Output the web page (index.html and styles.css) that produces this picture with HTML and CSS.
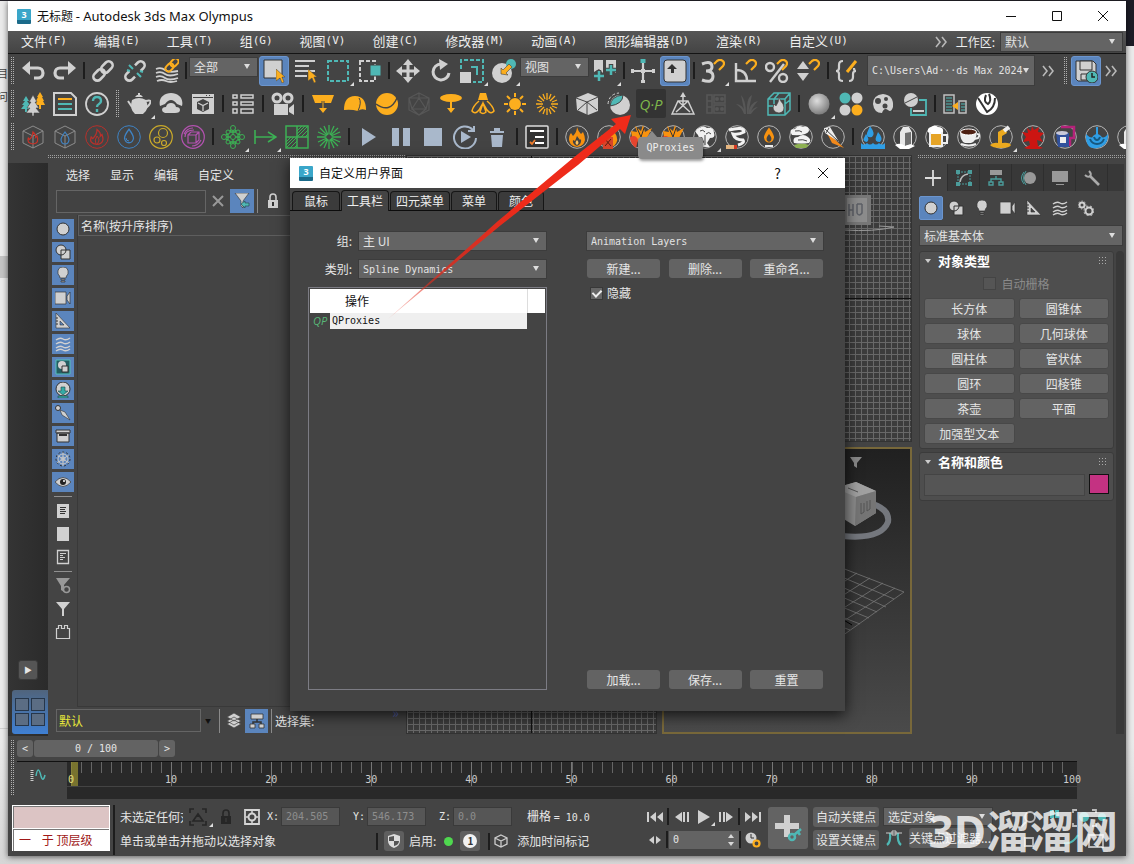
FILE: index.html
```html
<!DOCTYPE html>
<html lang="zh-CN">
<head>
<meta charset="utf-8">
<meta name="viewport" content="width=device-width, initial-scale=1">
<title>无标题 - Autodesk 3ds Max Olympus</title>
<link rel="stylesheet" href="styles.css">
</head>
<body>
<svg class="sprite" aria-hidden="true">
  <defs>
    <radialGradient id="ball" cx=".4" cy=".35" r=".7"><stop offset="0" stop-color="#ddd"/><stop offset="1" stop-color="#777"/></radialGradient>
    <linearGradient id="tail" gradientUnits="userSpaceOnUse" x1="388" y1="319" x2="520" y2="208"><stop offset="0" stop-color="#e8311f" stop-opacity=".2"/><stop offset=".5" stop-color="#e02a1c" stop-opacity=".85"/><stop offset="1" stop-color="#ee2b1a"/></linearGradient>
  </defs>
  <symbol id="undo" viewBox="0 0 24 24"><path fill="#d0d0d0" d="M1 9l8-7v14z"/><path fill="none" stroke="#d0d0d0" stroke-width="3.200" d="M7 9h10a4.500 4.500 0 0 1 0 10h-4"/></symbol>
  <symbol id="redo" viewBox="0 0 24 24"><path fill="#d0d0d0" d="M23 9l-8-7v14z"/><path fill="none" stroke="#d0d0d0" stroke-width="3.200" d="M17 9H7a4.500 4.500 0 0 0 0 10h4"/></symbol>
  <symbol id="link" viewBox="0 0 24 24"><g transform="rotate(-45 12 12)" fill="none" stroke="#d0d0d0" stroke-width="2.600"><rect x="0" y="8" width="13" height="8" rx="4"/><rect x="11" y="8" width="13" height="8" rx="4"/></g></symbol>
  <symbol id="unlink" viewBox="0 0 24 24"><g transform="rotate(-45 12 12)" fill="none" stroke="#d0d0d0" stroke-width="2.600"><path d="M8 16H4a4 4 0 0 1 0-8h4M16 8h4a4 4 0 0 1 0 8h-4"/></g><path stroke="#4fb8b5" stroke-width="2" d="M6 6l4 4M14 14l4 4M4 11l3 1M17 12l3 1"/></symbol>
  <symbol id="bind" viewBox="0 0 24 24"><g fill="none" stroke="#d0d0d0" stroke-width="1.800"><path d="M1 10q5-2 9 1t13 1M1 14q5-2 9 1t13 0M1 18q5-2 9 1t13 0M2 22q5-2 9 0t11 0"/></g><g transform="rotate(-45 17 6)" fill="none" stroke="#fcae1e" stroke-width="2"><rect x="9" y="3" width="9" height="6" rx="3"/><rect x="16" y="3" width="9" height="6" rx="3"/></g></symbol>
  <symbol id="cursor" viewBox="0 0 10 14"><path fill="#fcae1e" stroke="#444" stroke-width=".5" d="M0 0l9 8H6l2 5-2 1-2-5-4 3z"/></symbol>
  <symbol id="pick" viewBox="0 0 24 24"><path fill="#d0d0d0" stroke="#333" d="M2 1h18v18H2z"/><use href="#cursor" x="14" y="10" width="10" height="14"/></symbol>
  <symbol id="byname" viewBox="0 0 24 24"><path stroke="#d0d0d0" stroke-width="2" d="M1 2h20M1 7h14M1 12h20M1 17h12"/><use href="#cursor" x="14" y="10" width="10" height="14"/></symbol>
  <symbol id="region" viewBox="0 0 24 24"><path fill="none" stroke="#4fb8b5" stroke-width="2" stroke-dasharray="4 2" d="M2 2h20v20H2z"/></symbol>
  <symbol id="crossing" viewBox="0 0 24 24"><path fill="none" stroke="#d0d0d0" stroke-width="2" stroke-dasharray="4 2" d="M2 2h15v20H2z"/><path fill="#4fb8b5" stroke="#444" d="M12 6h11v11H12z"/></symbol>
  <symbol id="move" viewBox="0 0 24 24"><path stroke="#d0d0d0" stroke-width="3" d="M12 4v16M4 12h16"/><path fill="#d0d0d0" d="M12 0l5 6H7zM12 24l5-6H7zM0 12l6-5v10zM24 12l-6-5v10z"/></symbol>
  <symbol id="rotate" viewBox="0 0 24 24"><path fill="none" stroke="#d0d0d0" stroke-width="3" d="M13 5a8 8 0 1 0 8 9"/><path fill="#d0d0d0" d="M11 0l9 5-8 6z"/></symbol>
  <symbol id="scale" viewBox="0 0 24 24"><path fill="none" stroke="#4fb8b5" stroke-width="2" stroke-dasharray="4 2" d="M1 10V1h22v22H13"/><path fill="none" stroke="#4fb8b5" stroke-width="2" d="M11 8h6v8"/><path fill="#d0d0d0" d="M0 13h11v11H0z"/></symbol>
  <symbol id="place" viewBox="0 0 24 24"><circle cx="10" cy="14" r="10" fill="#d0d0d0"/><circle cx="19" cy="5" r="5" fill="#4fb8b5"/><path fill="#fcae1e" stroke="#444" stroke-width=".6" d="M9 15V9l2 2 6-6 3 3-6 6 2 2z"/></symbol>
  <symbol id="pivot" viewBox="0 0 24 24"><path fill="#d0d0d0" d="M1 1h9v13l-4-4-5 3zM13 1h10v13l-5-4-5 3z"/><path stroke="#444" stroke-width="4.500" d="M0 17h12M6 11v13M12 11h12M18 5v12"/><path stroke="#4fb8b5" stroke-width="2.500" d="M1 17h10M6 12v10M13 11h10M18 6v10"/></symbol>
  <symbol id="axis" viewBox="0 0 24 24"><path stroke="#d0d0d0" stroke-width="2.200" d="M12 4v20M1 12h22"/><path stroke="#4fb8b5" stroke-width="5" d="M12 0v4"/><path stroke="#d0d0d0" stroke-width="4" d="M0 12h3M21 12h3M12 21v3M10 12h4"/></symbol>
  <symbol id="keymode" viewBox="0 0 24 24"><rect x="1" y="1" width="22" height="22" rx="3" fill="#d0d0d0" stroke="#333"/><path fill="#333" d="M9 5l5 5h-3v4H8v-4H4z"/></symbol>
  <symbol id="magnet" viewBox="0 0 12 12"><path fill="none" stroke="#fcae1e" stroke-width="2.200" d="M1 5l3-3c4-3 9 1 6 5l-4 4"/></symbol>
  <symbol id="snap3" viewBox="0 0 24 24"><path fill="none" stroke="#d0d0d0" stroke-width="3" d="M1 5q10-4 10 3 0 4-6 4 7 0 7 5 0 8-11 4"/><use href="#magnet" x="12" y="0" width="12" height="12"/></symbol>
  <symbol id="anglesnap" viewBox="0 0 24 24"><path fill="none" stroke="#d0d0d0" stroke-width="2.400" d="M3 4v18h20M3 11q11 0 11 11"/><use href="#magnet" x="12" y="0" width="12" height="12"/></symbol>
  <symbol id="percent" viewBox="0 0 24 24"><g fill="none" stroke="#d0d0d0" stroke-width="2.400"><circle cx="5" cy="8" r="4"/><circle cx="18" cy="19" r="4"/><path d="M19 5L5 23"/></g><use href="#magnet" x="11" y="0" width="12" height="12"/></symbol>
  <symbol id="spinsnap" viewBox="0 0 24 24"><path fill="#d0d0d0" d="M6 2l6 8H0zM6 22l6-8H0z"/><use href="#magnet" x="11" y="0" width="12" height="12"/></symbol>
  <symbol id="braces" viewBox="0 0 24 24"><path fill="none" stroke="#d0d0d0" stroke-width="2.200" d="M8 2Q4 2 4 6v3q0 3-3 3 3 0 3 3v4q0 3 4 3M14 22q4 0 4-4v-3q0-3 3-3-2 0-2-3"/><path stroke="#fcae1e" stroke-width="3" d="M12 13l9-11"/></symbol>
  <symbol id="more" viewBox="0 0 12 12"><path fill="none" stroke="#b8b8b8" stroke-width="1.600" d="M1 1l4 5-4 5M7 1l4 5-4 5"/></symbol>
  <symbol id="save" viewBox="0 0 24 24"><path fill="#d0d0d0" stroke="#333" d="M2 2h17l3 3v17H4l-2-2z"/><path fill="#d0d0d0" stroke="#333" d="M6 2h12v9H6z"/><path fill="#d0d0d0" stroke="#333" d="M7 15h8v6H7z"/><circle cx="18" cy="18" r="6" fill="#4fb8b5" stroke="#333"/><path stroke="#222" stroke-width="1.500" fill="none" d="M18 14v4h3"/></symbol>

  <symbol id="trees" viewBox="0 0 24 24"><path fill="#4fb8b5" d="M5 4l3 5H6l3 4H7l2 4H0l3-4H1l3-4H2zM4 16h2v4H4z"/><path fill="#fcae1e" d="M19 0l3 5h-1l2 4h-1l2 4H14l2-4h-1l2-4h-1zM18 13h2v4h-2z"/><path fill="#d0d0d0" stroke="#444" stroke-width=".6" d="M12 3l4 7h-2l4 6h-3l4 5h-6v3h-2v-3H5l4-5H6l4-6H8z"/></symbol>
  <symbol id="list" viewBox="0 0 24 24"><path fill="none" stroke="#d0d0d0" stroke-width="2" d="M1 1h17l5 5v17H1z"/><path stroke="#fcae1e" stroke-width="2" d="M5 7h14"/><path stroke="#4fb8b5" stroke-width="2" d="M5 12h14M5 17h14"/></symbol>
  <symbol id="help" viewBox="0 0 24 24"><circle cx="12" cy="12" r="11" fill="none" stroke="#d0d0d0" stroke-width="1.800"/><path fill="none" stroke="#4fb8b5" stroke-width="2.400" d="M8 9q0-4 4-4t4 4q0 2-2 3t-2 3M12 17v3"/></symbol>
  <symbol id="teapot" viewBox="0 0 24 24"><path fill="#d0d0d0" d="M5 8q7-4 14 0 4 9-3 14H8Q2 17 5 8zM8 5h8l-2-2h-1V1h-2v2h-1z"/><path fill="none" stroke="#d0d0d0" stroke-width="2" d="M19 9q7-2 3 4l-4 4M5 15L1 9"/></symbol>
  <symbol id="dome" viewBox="0 0 24 24"><path fill="#d0d0d0" d="M1 14C-1 6 5 1 12 1s13 5 11 13l-5-2q-6-8-12 0z"/><path fill="#d0d0d0" d="M6 21q-3-1-3-3 0-3 4-3 1-4 5-4t5 4q4 0 4 3t-5 3z"/></symbol>
  <symbol id="render" viewBox="0 0 24 24"><path fill="#d0d0d0" d="M1 2h22v20H1z"/><path fill="#444" d="M2 5h20v1H2zM15 3h1v1h-1zM18 3h1v1h-1zM12 7l6 3v7l-6 3-6-3v-7z"/><path fill="none" stroke="#d0d0d0" stroke-width="1.300" d="M7 11l5 2.500 5-2.500M12 13v6"/></symbol>
  <symbol id="rows" viewBox="0 0 24 24"><path fill="none" stroke="#d0d0d0" stroke-width="1.500" d="M2 3h4v3H2zM10 3h12v3H10zM2 10h4v3H2zM10 10h12v3H10zM2 17h4v4H2zM10 17h12v4H10z"/></symbol>
  <symbol id="camera" viewBox="0 0 24 24"><path fill="#d0d0d0" d="M3 12h14v11H3zM18 16l5-4v11l-5-3z"/><circle cx="6" cy="6" r="4" fill="#444" stroke="#d0d0d0" stroke-width="3"/><circle cx="17" cy="6" r="4" fill="#444" stroke="#d0d0d0" stroke-width="3"/></symbol>
  <symbol id="plane-light" viewBox="0 0 24 24"><path fill="#fcae1e" d="M1 3h22l-3 8H4zM11 11h2v5h3l-4 5-4-5h3z"/><path stroke="#444" d="M11 9v7M13 9v7"/></symbol>
  <symbol id="dome-light" viewBox="0 0 24 24"><path fill="#fcae1e" d="M1 18Q1 4 12 4t11 14q-5-2-8 1-7-2-14-1z"/><path stroke="#444" fill="none" d="M16 6q3 4-1 13"/></symbol>
  <symbol id="sphere-light" viewBox="0 0 24 24"><circle cx="12" cy="12" r="11" fill="#fcae1e"/><path fill="none" stroke="#444" stroke-width="1.500" d="M1 12q14 10 21-6"/></symbol>
  <symbol id="mesh-light" viewBox="0 0 24 24"><path fill="none" stroke="#575757" stroke-width="1.200" d="M12 1l10 5v12l-10 5-10-5V6zM12 6l7 11H5zM12 1v5M2 6l10 0 10 0M5 17l-3-11M19 17l3-11M5 17l7 6 7-6"/></symbol>
  <symbol id="disc-light" viewBox="0 0 24 24"><ellipse cx="12" cy="6" rx="11" ry="4" fill="#fcae1e"/><path fill="#fcae1e" d="M11 9h2v7h3l-4 5-4-5h3z"/></symbol>
  <symbol id="ies" viewBox="0 0 24 24"><path fill="#fcae1e" d="M9 1h6l2 7H7z"/><path fill="none" stroke="#fcae1e" stroke-width="1.500" d="M8 9Q2 14 1 19q3 4 7-1l4-7 4 7q4 5 7 1-1-5-7-10M12 11l-3 9q3 3 6 0z"/></symbol>
  <symbol id="sun" viewBox="0 0 24 24"><circle cx="12" cy="12" r="6" fill="#fcae1e"/><path stroke="#fcae1e" stroke-width="2" d="M12 1v4M12 19v4M1 12h4M19 12h4M4 4l3 3M17 17l3 3M4 20l3-3M17 7l3-3"/></symbol>
  <symbol id="burst" viewBox="0 0 24 24"><path stroke="#fcae1e" stroke-width="1.300" d="M12 1v7M12 16v7M1 12h7M16 12h7M4 4l5 5M15 15l5 5M4 20l5-5M15 9l5-5M8 2l2 5M16 2l-2 5M8 22l2-5M16 22l-2-5M2 8l5 2M22 8l-5 2M2 16l5-2M22 16l-5-2"/></symbol>
  <symbol id="cube" viewBox="0 0 24 24"><path fill="#d0d0d0" d="M13 1l10 4v14l-10 4L2 18 1 6z"/><path fill="none" stroke="#444" d="M1 6l11 4 11-5M12 10v13M3 18l9-8 10 8"/></symbol>
  <symbol id="clip" viewBox="0 0 24 24"><circle cx="13" cy="13" r="10" fill="#d0d0d0"/><path fill="#4fb8b5" stroke="#444" d="M3 14Q4 4 16 3q0 9-13 11z"/><path fill="none" stroke="#d0d0d0" stroke-dasharray="3 2" d="M1 12Q2 2 12 1"/></symbol>
  <symbol id="stand" viewBox="0 0 24 24"><path fill="none" stroke="#d0d0d0" stroke-width="1.500" d="M7 9h10l6 13H1zM12 3v10M7 9l12 11M17 9L5 20M1 22h22"/><path fill="#d0d0d0" d="M12 0l3 5H9z"/></symbol>
  <symbol id="fur" viewBox="0 0 24 24"><path fill="none" stroke="#575757" stroke-width="1.600" d="M4 3h5v18H4zM4 9h5M4 15h5M11 3h11v8H11zM11 13h11v8H11z"/><circle cx="14" cy="7" r="2" fill="#575757"/><circle cx="19" cy="7" r="2" fill="#575757"/><circle cx="14" cy="17" r="2" fill="#575757"/><circle cx="19" cy="17" r="2" fill="#575757"/></symbol>
  <symbol id="grass" viewBox="0 0 24 24"><path fill="#575757" d="M11 22Q8 12 1 12q6 4 8 10zM11 22Q11 8 6 3q2 10 4 19zM12 22Q11 6 17 3q-2 9-4 19zM13 22q2-12 10-13-6 6-8 13zM14 22q4-7 9-7-5 3-7 7z"/></symbol>
  <symbol id="volgrid" viewBox="0 0 24 24"><path fill="none" stroke="#4fb8b5" stroke-width="1.500" d="M7 1h16v17l-5 5H1V7zM1 7h17v16M18 7l5-6M12 1L7 7v5M1 14h5M18 12l5-4"/><path fill="#d0d0d0" stroke="#444" stroke-width=".6" d="M12 5q1 4 4 7 3 8-4 9-8-1-5-9l2 2q3-4 3-9z"/></symbol>
  <symbol id="ballicon" viewBox="0 0 24 24"><circle cx="12" cy="12" r="10.500" fill="url(#ball)"/></symbol>
  <symbol id="fourballs" viewBox="0 0 24 24"><g fill="#d0d0d0"><circle cx="6" cy="6" r="5.500" fill="#4fb8b5"/><circle cx="18" cy="6" r="5.500"/><circle cx="6" cy="18" r="5.500"/><circle cx="18" cy="18" r="5.500" fill="#fcae1e"/></g></symbol>
  <symbol id="palette" viewBox="0 0 24 24"><path fill="#d0d0d0" d="M12 2q11 1 10 13-2 6-5 3-4-3-6 3-8 0-9-9 0-9 10-10z"/><g fill="#444"><circle cx="7" cy="9" r="3"/><circle cx="15" cy="7" r="2"/><circle cx="14" cy="14" r="2.500"/></g></symbol>
  <symbol id="baketex" viewBox="0 0 24 24"><circle cx="8" cy="8" r="7" fill="#d0d0d0"/><path stroke="#444" fill="none" d="M2 11l12-6"/><path fill="none" stroke="#4fb8b5" stroke-width="1.800" d="M16 8h7v15H8v-7"/><path fill="#d0d0d0" d="M10 18h11v2H10z"/></symbol>
  <symbol id="convert" viewBox="0 0 24 24"><path fill="none" stroke="#c0c0c0" stroke-width="1.500" d="M1 3h10v18H1zM16 9h7v12h-7z"/><path stroke="#4fb8b5" d="M3 6h6M3 9h6M3 12h6M3 15h6M3 18h6M18 12h4M18 15h4M18 18h4"/><path fill="#fcae1e" d="M9 14l6-4v8z"/></symbol>
  <symbol id="vray" viewBox="0 0 24 24"><circle cx="12" cy="12" r="11" fill="#fff"/><path fill="none" stroke="#333" stroke-width="2" d="M3 6l9 14q8-4 8-14M11 3q-3 7 2 9 4-3 1-10"/></symbol>

  <symbol id="ring" viewBox="0 0 24 24"><circle cx="12" cy="12" r="11.300" fill="none" stroke="currentColor"/></symbol>
  <symbol id="flame" viewBox="0 0 24 24"><path d="M12 3q5 4 4 8l2-2q4 11-6 12-10-1-7-9l2 2q5-5 5-11z"/></symbol>
  <symbol id="drop" viewBox="0 0 24 24"><path d="M12 3q6 8 6 12-1 6-6 6t-6-6q0-4 6-12z"/></symbol>
  <symbol id="wirecube" viewBox="0 0 24 24"><path fill="none" stroke="#8c8c8c" d="M12 1l10 5v12l-10 5-10-5V6zM2 6l10 5 10-5M12 11v12"/></symbol>
  <symbol id="cubefire" viewBox="0 0 24 24"><use href="#wirecube"/><use href="#flame" x="4" y="5" width="16" height="16" fill="none" stroke="#c83228" stroke-width="1.800"/></symbol>
  <symbol id="cubewater" viewBox="0 0 24 24"><use href="#wirecube"/><use href="#drop" x="4" y="5" width="16" height="16" fill="none" stroke="#3f83c4" stroke-width="1.800"/></symbol>
  <symbol id="redfire" viewBox="0 0 24 24"><g color="#b8302b"><use href="#ring"/><use href="#flame" x="2" y="2" width="20" height="20" fill="none" stroke="#b8302b" stroke-width="1.500"/><path stroke="#b8302b" fill="none" d="M12 19q4-4 0-8-3 4-1 8"/></g></symbol>
  <symbol id="bluedrop" viewBox="0 0 24 24"><g color="#3f83c4"><use href="#ring"/><use href="#drop" x="3" y="2" width="18" height="18" fill="none" stroke="#3f83c4" stroke-width="1.700"/><path fill="none" stroke="#3f83c4" d="M9 13q0 3 3 3"/></g></symbol>
  <symbol id="bubbles" viewBox="0 0 24 24"><g fill="none" stroke="#c9a92b" stroke-width="1.200"><circle cx="12" cy="12" r="11.300"/><circle cx="14" cy="8" r="4.500"/><circle cx="8" cy="15" r="3"/><circle cx="15" cy="18" r="2.500"/></g></symbol>
  <symbol id="purplebox" viewBox="0 0 24 24"><g fill="none" stroke="#b352b0" stroke-width="1.200"><circle cx="12" cy="12" r="11.300"/><path d="M7 10h8v8H7zM7 10l3-3h8v8l-3 3M15 10l3-3M3 9q3-6 9-6M4 12q0-7 9-7M20 15q-3 6-9 6"/></g></symbol>
  <symbol id="nodes" viewBox="0 0 24 24"><g fill="none" stroke="#3cb054" stroke-width="1.300"><path d="M12 3l9 9-9 9-9-9zM12 3v18M3 12h18M7 7h10v10H7z"/></g><g fill="#444" stroke="#3cb054"><circle cx="12" cy="3" r="2.500"/><circle cx="12" cy="12" r="2.500"/><circle cx="12" cy="21" r="2.500"/><circle cx="3" cy="12" r="2.500"/><circle cx="21" cy="12" r="2.500"/><circle cx="7" cy="7" r="2"/><circle cx="17" cy="7" r="2"/><circle cx="7" cy="17" r="2"/><circle cx="17" cy="17" r="2"/></g></symbol>
  <symbol id="greenarrow" viewBox="0 0 24 24"><path fill="none" stroke="#3cb054" stroke-width="1.600" d="M2 5v14M2 12h20M15 7l8 5-8 5"/></symbol>
  <symbol id="checker" viewBox="0 0 24 24"><path fill="none" stroke="#3cb054" stroke-width="1.500" d="M1 1h22v22H1zM12 1v22M1 12h22"/><path stroke="#3cb054" d="M12 6l5-5M12 9l8-8M12 12L23 1M16 12l7-7M20 12l3-3M1 17l5-5M1 20l8-8M1 23l11-11M5 23l7-7M9 23l3-3"/></symbol>
  <symbol id="spark" viewBox="0 0 24 24"><path stroke="#3cb054" stroke-width="1.300" d="M12 0v9M12 15v9M0 12h9M15 12h9M3 3l7 7M14 14l7 7M3 21l7-7M14 10l7-7M7 1l4 9M13 14l4 9M17 1l-4 9M11 14l-4 9M1 7l9 4M14 13l9 4M1 17l9-4M14 11l9-4"/></symbol>
  <symbol id="play" viewBox="0 0 24 24"><path fill="#a9b8cb" d="M5 3l14 9-14 9z"/></symbol>
  <symbol id="pause" viewBox="0 0 24 24"><path fill="#a9b8cb" d="M3 3h7v18H3zM14 3h7v18h-7z"/></symbol>
  <symbol id="stop" viewBox="0 0 24 24"><path fill="#a9b8cb" d="M3 3h18v18H3z"/></symbol>
  <symbol id="replay" viewBox="0 0 24 24"><path fill="none" stroke="#a9b8cb" stroke-width="2" d="M20 5a11 11 0 1 0 3 8M15 6h6V1"/><path fill="#a9b8cb" d="M8 6l10 6-10 6z"/></symbol>
  <symbol id="trash" viewBox="0 0 24 24"><path fill="#a9b8cb" d="M5 6h14v2H5zM9 3h6v3H9zM6 10h12l-1 12H7z"/></symbol>
  <symbol id="tasks" viewBox="0 0 24 24"><rect x="1" y="1" width="22" height="22" rx="1" fill="#333" stroke="#ddd" stroke-width="1.500"/><path stroke="#fff" stroke-width="2" d="M5 6h14M10 12h9M10 18h9"/><path stroke="#ef7d2d" stroke-width="1.800" fill="none" d="M5 17l2 2 3-4"/></symbol>
  <symbol id="fire1" viewBox="0 0 24 24"><use href="#ring"/><path fill="#f8920f" d="M12 2q1 4 4 7l2-2q2 4 2 8-1 6-8 7-7-1-8-7 0-5 2-7l2 3q4-4 4-9z"/><path fill="#444" d="M12 11l3 4 1-1q1 5-4 7-5-2-4-6l2 1z"/><path fill="#ffc35c" d="M12 15q3 3 0 5-3-2 0-5z"/></symbol>
  <symbol id="fire2" viewBox="0 0 24 24"><use href="#ring"/><path fill="#f8920f" d="M14 1q1 4 4 7 5 7-1 13H7q-6-5-2-11l2 2q7-4 7-11z"/><path fill="#d8452b" d="M6 12h10v12H6z"/><path stroke="#5a1c10" d="M8 14l6 7M14 14l-6 7"/></symbol>
  <symbol id="blast" viewBox="0 0 24 24"><use href="#ring"/><path fill="#f8920f" d="M2 6l6 1-2-6 6 5 2-6 2 7 7-4-5 10-14 5z"/><path fill="#e6452f" d="M1 12q6-3 8 3l-2 8q-6-4-6-11z"/><path stroke="#333" d="M8 3l4 9M15 3l-3 9"/></symbol>
  <symbol id="smoke" viewBox="0 0 24 24"><use href="#ring"/><path fill="#f1f1f1" d="M5 10Q0 6 6 3q5-3 8 0 7-1 7 5 2 5-4 5l-3 5 3 4H7l4-5-2-5q-4 1-4-2z"/><path fill="none" stroke="#444" d="M7 6q3-2 5 1M13 9q3-3 5 0M12 20V10"/></symbol>
  <symbol id="cigar" viewBox="0 0 24 24"><use href="#ring"/><path fill="none" stroke="#f3f3f3" stroke-width="3" d="M4 5q15-4 15 2-5 3-11 2 2 6 10 6 2 3-5 5"/><path stroke="#e9b983" stroke-width="4" d="M1 22h8"/><path stroke="#d83a23" stroke-width="4" d="M9 22h3"/></symbol>
  <symbol id="candle" viewBox="0 0 24 24"><use href="#ring"/><use href="#drop" x="2" y="0" width="20" height="20" fill="#f8920f"/><path fill="#444" d="M12 9q5 6 0 8-5-2 0-8z"/><path stroke="#eee" stroke-width="2" d="M8 21h8"/></symbol>
  <symbol id="cloud" viewBox="0 0 24 24"><use href="#ring"/><path fill="#8fb252" d="M5 20q8-3 15 0l-3 3H7z"/><path fill="#f3f3f3" d="M3 10Q-1 4 6 4q3-5 8-2 6-2 6 4-2 5-17 4zM5 18q-2-6 4-6 5-4 10 0 4 3 1 6-8 1-15 0z"/><path fill="none" stroke="#444" d="M6 6q5-1 7 1M9 15q5-1 9 1"/></symbol>
  <symbol id="rocket" viewBox="0 0 24 24"><use href="#ring"/><path fill="#f28a1d" d="M5 6l18 17-12-5z"/><path fill="#eee" d="M3 3l6-1 9 15L4 8z"/><path stroke="#444" fill="none" d="M4 4l13 12M8 3L5 8"/></symbol>
  <symbol id="water" viewBox="0 0 24 24"><use href="#ring"/><path fill="#2f9ee5" d="M9 1q6 8 2 11-6 1-5-4zM17 7q6 7 2 10-6 0-4-5zM5 9q4 5 1 8-5-1-3-4zM0 24v-6q3 3 6 0 3 3 6 0 3 3 6 0 3 3 6 0v6z"/></symbol>
  <symbol id="milk" viewBox="0 0 24 24"><use href="#ring"/><path fill="#e8e8e8" d="M7 7l3-5h6l3 5v13l-6 2-6-2z"/><path fill="#6f6f6f" d="M12 8l6-1v12l-6 2z"/><path fill="#fff" d="M2 20q5-3 10 1 6-3 10 0l-6 3H7z"/></symbol>
  <symbol id="beer" viewBox="0 0 24 24"><use href="#ring"/><path fill="#e6a426" d="M5 6h12v15H5z"/><path fill="#fff" d="M3 7q-1-4 3-5 4-3 7 0 6 0 5 5l-2 2H5z"/><path fill="none" stroke="#eee" stroke-width="2" d="M5 7v14h12V7M18 10h4v8h-4"/></symbol>
  <symbol id="coffee" viewBox="0 0 24 24"><use href="#ring"/><path fill="#eee" d="M3 7h17q-1 10-6 11H8Q3 16 3 7z"/><ellipse cx="11.500" cy="7" rx="8" ry="3" fill="#4d1f12" stroke="#fff"/><path fill="none" stroke="#eee" stroke-width="2" d="M20 9q4 0 1 4l-4 1M4 19q8 3 15 0"/></symbol>
  <symbol id="honey" viewBox="0 0 24 24"><use href="#ring"/><path fill="#eba91e" d="M1 20q4-3 8-2V7l7-4 2 5-5 3v7q7-1 9 2-1 3-10 3T1 20z"/><path stroke="#eee" stroke-width="4" d="M15 6l5-4"/></symbol>
  <symbol id="blood" viewBox="0 0 24 24"><use href="#ring"/><path fill="#cc1512" d="M11 1l2 4 5-3-1 5 6 1-4 4 3 5-6-2 1 6 5 2q-10 3-19 0l6-3-1-4-6 1 3-5-4-5 6 1-1-5 4 3z"/></symbol>
  <symbol id="paint" viewBox="0 0 24 24"><use href="#ring"/><path fill="none" stroke="#b5227a" stroke-width="2.500" d="M8 2h13v11h-4v8"/><path fill="#31519c" d="M3 8h13v14H5z"/><path fill="#eee" d="M7 12h6v6H7z"/><ellipse cx="9" cy="8" rx="6" ry="2" fill="#c9c9d9"/></symbol>
  <symbol id="swirl" viewBox="0 0 24 24"><use href="#ring"/><path fill="#2f9ee5" d="M1 9q6 6 7 2 4-4 8 0 2 4 7-2 1 12-11 14T1 9z"/><path fill="none" stroke="#16577f" stroke-width="2" d="M5 14q2 5 7 5t7-5M9 12q1 3 3 3t3-3"/><path stroke="#2f9ee5" stroke-width="2" d="M12 2v8"/></symbol>

  <symbol id="o-sphere" viewBox="0 0 16 16"><circle cx="8" cy="8" r="6" fill="#d0d0d0" stroke="#333"/></symbol>
  <symbol id="o-shape" viewBox="0 0 16 16"><circle cx="6" cy="6" r="5" fill="#d0d0d0" stroke="#333"/><path fill="#d0d0d0" stroke="#333" d="M6 6h9v9H6z"/><path fill="none" stroke="#333" d="M6 11a5 5 0 0 0 5-5"/></symbol>
  <symbol id="o-light" viewBox="0 0 16 16"><path fill="#d0d0d0" stroke="#333" stroke-width=".7" d="M5 11q0-2-2-4-1-7 5-7t5 7q-2 2-2 4zM6 12h4v1H6zM6 14h4v1H6z"/></symbol>
  <symbol id="o-cam" viewBox="0 0 16 16"><path fill="#d0d0d0" stroke="#333" stroke-width=".7" d="M0 2h11v12H0zM12 6l3-4v12l-3-4z"/></symbol>
  <symbol id="o-help" viewBox="0 0 16 16"><path fill="#d0d0d0" stroke="#333" stroke-width=".6" fill-rule="evenodd" d="M1 0l14 15H1zM5 8v4h4z"/><path stroke="#333" d="M1 5h2M1 8h2M1 11h2"/></symbol>
  <symbol id="o-warp" viewBox="0 0 16 16"><path fill="none" stroke="#d0d0d0" stroke-width="1.400" d="M1 4q4-3 7-1t7-1M1 8q4-3 7-1t7-1M1 12q4-3 7-1t7-1M1 15q4-3 7-1t7-1"/></symbol>
  <symbol id="o-group" viewBox="0 0 16 16"><path fill="#245e62" stroke="#55c0bb" d="M1 1h14v14H1z"/><circle cx="7" cy="6" r="4" fill="#d0d0d0"/><path fill="#d0d0d0" stroke="#333" d="M7 7h6v6H7z"/></symbol>
  <symbol id="o-xref" viewBox="0 0 16 16"><circle cx="8" cy="7" r="7" fill="#d0d0d0" stroke="#333"/><path fill="#35aaa5" stroke="#244" stroke-width=".6" d="M6 5h4v4h3l-5 4-5-4h3zM3 14h10v2H3z"/></symbol>
  <symbol id="o-bone" viewBox="0 0 16 16"><path fill="#d0d0d0" stroke="#333" stroke-width=".6" d="M5 5l5 2 5 8-8-5z"/><circle cx="3" cy="3" r="2.500" fill="#d0d0d0" stroke="#333"/></symbol>
  <symbol id="o-box" viewBox="0 0 16 16"><path fill="#d0d0d0" stroke="#333" d="M1 2h14v3H1zM2 5h12v9H2z"/><path stroke="#333" stroke-width="2" d="M4 7h8"/></symbol>
  <symbol id="o-frozen" viewBox="0 0 16 16"><g fill="none" stroke="#c8c8c8"><path d="M8 1v14M2 4l12 8M14 4L2 12"/><circle cx="8" cy="8" r="5"/><circle cx="8" cy="8" r="2"/><circle cx="8" cy="8" r="7" stroke="#333" stroke-dasharray="2 2"/></g></symbol>
  <symbol id="o-eye" viewBox="0 0 16 16"><path fill="#d0d0d0" stroke="#333" stroke-width=".7" d="M0 8q8-9 16 0-8 9-16 0z"/><circle cx="8" cy="8" r="3" fill="#222"/><circle cx="9" cy="7" r="1" fill="#fff"/></symbol>
  <symbol id="o-all" viewBox="0 0 16 16"><path fill="#d0d0d0" d="M2 1h12v14H2z"/><path stroke="#333" d="M5 4.500h6M5 6.500h5M5 8.500h6M5 10.500h5"/></symbol>
  <symbol id="o-none" viewBox="0 0 16 16"><path fill="#d0d0d0" d="M2 1h12v14H2z"/></symbol>
  <symbol id="o-invert" viewBox="0 0 16 16"><path fill="none" stroke="#d0d0d0" stroke-width="1.300" d="M2.500 1.500h11v13h-11z"/><path stroke="#d0d0d0" d="M5 4.500h6M5 6.500h3M5 8.500h5M5 10.500h3"/></symbol>
  <symbol id="o-funnel" viewBox="0 0 16 16"><path fill="currentColor" d="M1 1h14L9 8v7H7V8z"/></symbol>
  <symbol id="o-fgear" viewBox="0 0 16 16"><path fill="#999" d="M1 0h14L9 7v7L6 12V8z"/><circle cx="11.500" cy="11.500" r="3" fill="#444" stroke="#999" stroke-width="1.500"/></symbol>
  <symbol id="o-brick" viewBox="0 0 16 16"><path fill="none" stroke="#d0d0d0" stroke-width="1.200" d="M1.500 4.500h2v-3h3v3h3v-3h3v3h2v10h-13z"/></symbol>
  <symbol id="o-gears" viewBox="0 0 16 16"><g fill="none" stroke="#d0d0d0" stroke-width="2"><circle cx="4" cy="5" r="2.500"/><circle cx="11" cy="11" r="3.500"/><circle cx="4" cy="5" r="4" stroke-width="1" stroke-dasharray="1 2"/><circle cx="11" cy="11" r="5" stroke-width="1" stroke-dasharray="2 2"/></g></symbol>
  <symbol id="o-filterpick" viewBox="0 0 16 16"><path fill="#d0d0d0" stroke="#333" stroke-width=".6" d="M1 0h14L9 8v7l-2-2V8z"/><path fill="#4fb8b5" stroke="#244" stroke-width=".6" d="M7 11l4-3v2h4v3h-4v2z"/></symbol>
  <symbol id="lock" viewBox="0 0 16 16"><path fill="none" stroke="currentColor" stroke-width="1.600" d="M5 8V4q0-3 3-3t3 3v4"/><path fill="currentColor" d="M3 7h10v8H3z"/><path fill="#333" d="M7 9h2v4H7z"/></symbol>
  <symbol id="stack" viewBox="0 0 16 16"><path fill="#d0d0d0" stroke="#444" stroke-width=".7" d="M8 7l7 4-7 4-7-4zM8 4l7 4-7 4-7-4zM8 0l7 4-7 4-7-4z"/></symbol>
  <symbol id="tree" viewBox="0 0 16 16"><path fill="#d0d0d0" stroke="#333" stroke-width=".8" d="M2 1h12v5H2zM1 11h5v4H1zM10 11h5v4h-5z"/><path fill="none" stroke="#333" stroke-width="1.500" d="M8 6v3M4 11V9h8v2"/></symbol>

  <symbol id="t-plus" viewBox="0 0 16 16"><path stroke="#ddd" stroke-width="1.800" d="M8 0v16M0 8h16"/></symbol>
  <symbol id="t-modify" viewBox="0 0 16 16"><path fill="none" stroke="#4b9c9b" stroke-dasharray="2 1" d="M2 2h12v12H2z"/><path fill="#4b9c9b" d="M0 0h4v4H0zM12 0h4v4h-4zM0 12h4v4H0zM12 12h4v4h-4z"/><path fill="none" stroke="#bbb" stroke-width="1.500" d="M4 12q1-7 8-8"/></symbol>
  <symbol id="t-hier" viewBox="0 0 16 16"><path fill="#999" d="M2 0h12v5H2z"/><path fill="none" stroke="#4b9c9b" stroke-width="1.400" d="M8 6v3M3 12V9h10v3M1 12h4v3H1zM11 12h4v3h-4z"/></symbol>
  <symbol id="t-motion" viewBox="0 0 16 16"><circle cx="10" cy="8" r="6" fill="#999"/><path fill="none" stroke="#4b9c9b" d="M4 2q-5 6 0 12M6 1q-5 7 0 14"/></symbol>
  <symbol id="t-disp" viewBox="0 0 16 16"><path fill="#999" d="M0 1h16v11H0zM4 14h8v1H4z"/></symbol>
  <symbol id="t-util" viewBox="0 0 16 16"><path fill="none" stroke="#aaa" stroke-width="2.600" d="M6 6l9 9"/><path fill="none" stroke="#aaa" stroke-width="2" d="M5 1Q8 4 6 6T1 5"/></symbol>

  <symbol id="curve" viewBox="0 0 16 16"><path stroke="#ccc" stroke-dasharray="1 1" stroke-width="3" d="M2 3v11"/><path fill="none" stroke="#4fb8b5" stroke-width="1.500" d="M6 9q2-12 5 0 2 7 4-1"/></symbol>
  <symbol id="iso" viewBox="0 0 20 20"><path fill="none" stroke="currentColor" stroke-width="1.600" d="M2 6V2h4M14 2h4v4M2 14v4h4M14 18h4v-4M5 14l5-7 5 7zM10 7v3"/></symbol>
  <symbol id="abs" viewBox="0 0 16 16"><path fill="none" stroke="#d5d5d5" stroke-width="1.800" d="M1 1h14v14H1z"/><circle cx="8" cy="8" r="3.500" fill="none" stroke="#d5d5d5" stroke-width="2"/><path stroke="#d5d5d5" stroke-width="1.500" d="M8 2v3M8 11v3M2 8h3M11 8h3"/></symbol>
  <symbol id="shield" viewBox="0 0 16 16"><path fill="#ddd" d="M8 1l6 2v5q0 5-6 7-6-2-6-7V3z"/><path fill="#555" d="M8 3v5H3V4zM8 8h5q0 4-5 5z"/></symbol>
  <symbol id="minicube" viewBox="0 0 16 16"><path fill="none" stroke="#ccc" stroke-width="1.300" d="M8 2l6 3v6l-6 3-6-3V5zM2 5l6 3 6-3M8 8v6"/></symbol>
  <symbol id="first" viewBox="0 0 16 16"><path fill="#d0d0d0" d="M0 3h2v10H0zM9 3v10L3 8zM16 3v10l-6-5z"/></symbol>
  <symbol id="last" viewBox="0 0 16 16"><path fill="#d0d0d0" d="M14 3h2v10h-2zM7 3v10l6-5zM0 3v10l6-5z"/></symbol>
  <symbol id="prev" viewBox="0 0 16 16"><path fill="#d0d0d0" d="M8 3v10L1 8zM9 3h2v10H9zM13 3h2v10h-2z"/></symbol>
  <symbol id="next" viewBox="0 0 16 16"><path fill="#d0d0d0" d="M8 3v10l7-5zM1 3h2v10H1zM5 3h2v10H5z"/></symbol>
  <symbol id="go" viewBox="0 0 16 16"><path fill="#d0d0d0" d="M2 1l12 7-12 7z"/></symbol>
  <symbol id="updown" viewBox="0 0 16 16"><path fill="#d0d0d0" d="M7 4v8L2 8zM9 4v8l5-4z"/></symbol>
  <symbol id="clock" viewBox="0 0 16 16"><circle cx="6" cy="6" r="5.500" fill="#d0d0d0"/><path fill="none" stroke="#333" d="M6 2v4h3"/><circle cx="11.500" cy="11.500" r="3" fill="#444" stroke="#fcae1e" stroke-width="2.200"/></symbol>
  <symbol id="bigkey" viewBox="0 0 28 28"><path fill="#d0d0d0" d="M10 1h6v8h9v6h-9v8h-6v-8H1V9h9z"/><circle cx="18" cy="23" r="3" fill="none" stroke="#4fb8b5" stroke-width="2.500"/><path fill="none" stroke="#4fb8b5" stroke-width="2.500" d="M20 21l7-6M24 18l2 3"/></symbol>
  <symbol id="tangent" viewBox="0 0 16 16"><path fill="none" stroke="#4fb8b5" stroke-width="2.200" d="M1 15Q5 12 4 3M15 15q-4-3-3-12"/><path fill="none" stroke="#ccc" d="M0 3h16M6 1h4v4H6z"/></symbol>
</svg>

<div class="desktop">
  <span class="behind behind-1" aria-hidden="true">目</span>
  <span class="behind behind-2" aria-hidden="true">问</span>
  <div class="window">
    <header class="titlebar">
      <span class="logo" aria-hidden="true">3</span>
      <h1>无标题 <span>- Autodesk 3ds Max Olympus</span></h1>
      <div class="caption">
        <button aria-label="最小化"><svg viewBox="0 0 12 12"><path d="M1 6.500h10"/></svg></button>
        <button aria-label="最大化"><svg viewBox="0 0 12 12"><path d="M1.500 1.500h9v9h-9z"/></svg></button>
        <button aria-label="关闭"><svg viewBox="0 0 12 12"><path d="M1 1l10 10M11 1L1 11"/></svg></button>
      </div>
    </header>

    <nav class="menubar">
      <button>文件<i>(F)</i></button><button>编辑<i>(E)</i></button><button>工具<i>(T)</i></button><button>组<i>(G)</i></button><button>视图<i>(V)</i></button><button>创建<i>(C)</i></button><button>修改器<i>(M)</i></button><button>动画<i>(A)</i></button><button>图形编辑器<i>(D)</i></button><button>渲染<i>(R)</i></button><button>自定义<i>(U)</i></button>
      <div class="workspace-pick">
        <svg class="i12"><use href="#more"/></svg>
        <label for="ws">工作区:</label>
        <span class="pick"><select id="ws"><option>默认</option></select></span>
      </div>
    </nav>

    <div class="toolbar main">
      <span class="grip"></span>
      <button class="tool" aria-label="撤消"><svg><use href="#undo"/></svg></button>
      <button class="tool" aria-label="重做"><svg><use href="#redo"/></svg></button>
      <span class="sep"></span>
      <button class="tool" aria-label="链接"><svg><use href="#link"/></svg></button>
      <button class="tool" aria-label="取消链接"><svg><use href="#unlink"/></svg></button>
      <button class="tool" aria-label="绑定到空间扭曲"><svg><use href="#bind"/></svg></button>
      <span class="sep"></span>
      <span class="pick filter"><select aria-label="选择过滤器"><option>全部</option></select></span>
      <button class="tool on" aria-label="选择对象"><svg><use href="#pick"/></svg></button>
      <button class="tool" aria-label="按名称选择"><svg><use href="#byname"/></svg></button>
      <button class="tool fly" aria-label="选择区域"><svg><use href="#region"/></svg></button>
      <button class="tool" aria-label="窗口/交叉"><svg><use href="#crossing"/></svg></button>
      <span class="sep"></span>
      <button class="tool" aria-label="移动"><svg><use href="#move"/></svg></button>
      <button class="tool" aria-label="旋转"><svg><use href="#rotate"/></svg></button>
      <button class="tool fly" aria-label="缩放"><svg><use href="#scale"/></svg></button>
      <button class="tool fly" aria-label="放置"><svg><use href="#place"/></svg></button>
      <span class="pick filter"><select aria-label="参考坐标系"><option>视图</option></select></span>
      <button class="tool fly" aria-label="轴点中心"><svg><use href="#pivot"/></svg></button>
      <span class="sep"></span>
      <button class="tool" aria-label="操纵"><svg><use href="#axis"/></svg></button>
      <button class="tool on" aria-label="键盘快捷键覆盖"><svg><use href="#keymode"/></svg></button>
      <span class="sep"></span>
      <button class="tool fly" aria-label="捕捉开关"><svg><use href="#snap3"/></svg></button>
      <button class="tool" aria-label="角度捕捉"><svg><use href="#anglesnap"/></svg></button>
      <button class="tool" aria-label="百分比捕捉"><svg><use href="#percent"/></svg></button>
      <button class="tool" aria-label="微调器捕捉"><svg><use href="#spinsnap"/></svg></button>
      <span class="sep"></span>
      <button class="tool" aria-label="命名选择集"><svg><use href="#braces"/></svg></button>
      <span class="pick path"><select class="mono" aria-label="项目路径"><option>C:\Users\Ad···ds Max 2024</option></select></span>
      <svg class="i12 chev"><use href="#more"/></svg>
      <span class="grip"></span>
      <button class="tool on" aria-label="自动备份"><svg><use href="#save"/></svg></button>
      <svg class="i12"><use href="#more"/></svg>
    </div>

    <div class="toolbar">
      <span class="grip"></span>
      <button class="tool" aria-label="森林"><svg><use href="#trees"/></svg></button>
      <button class="tool" aria-label="列表"><svg><use href="#list"/></svg></button>
      <button class="tool" aria-label="帮助"><svg><use href="#help"/></svg></button>
      <span class="grip mid"></span>
      <button class="tool fly" aria-label="渲染"><svg><use href="#teapot"/></svg></button>
      <button class="tool" aria-label="穹顶"><svg><use href="#dome"/></svg></button>
      <button class="tool" aria-label="渲染帧窗口"><svg><use href="#render"/></svg></button>
      <span class="sep"></span>
      <button class="tool" aria-label="属性"><svg><use href="#rows"/></svg></button>
      <span class="sep"></span>
      <button class="tool" aria-label="物理摄影机"><svg><use href="#camera"/></svg></button>
      <span class="sep"></span>
      <button class="tool" aria-label="平面灯光"><svg><use href="#plane-light"/></svg></button>
      <button class="tool" aria-label="穹顶灯光"><svg><use href="#dome-light"/></svg></button>
      <button class="tool" aria-label="球体灯光"><svg><use href="#sphere-light"/></svg></button>
      <button class="tool" aria-label="网格灯光" disabled><svg><use href="#mesh-light"/></svg></button>
      <button class="tool" aria-label="圆盘灯光"><svg><use href="#disc-light"/></svg></button>
      <button class="tool" aria-label="光域网"><svg><use href="#ies"/></svg></button>
      <button class="tool" aria-label="太阳"><svg><use href="#sun"/></svg></button>
      <button class="tool" aria-label="环境光"><svg><use href="#burst"/></svg></button>
      <span class="sep"></span>
      <button class="tool" aria-label="代理"><svg><use href="#cube"/></svg></button>
      <button class="tool" aria-label="剪切器"><svg><use href="#clip"/></svg></button>
      <button class="tool qp" aria-label="QProxies">Q·P</button>
      <button class="tool" aria-label="平面"><svg><use href="#stand"/></svg></button>
      <button class="tool" aria-label="毛发" disabled><svg><use href="#fur"/></svg></button>
      <button class="tool" aria-label="草" disabled><svg><use href="#grass"/></svg></button>
      <button class="tool" aria-label="体积网格"><svg><use href="#volgrid"/></svg></button>
      <span class="sep"></span>
      <button class="tool fly" aria-label="材质球"><svg><use href="#ballicon"/></svg></button>
      <button class="tool" aria-label="材质库"><svg><use href="#fourballs"/></svg></button>
      <button class="tool" aria-label="调色板"><svg><use href="#palette"/></svg></button>
      <button class="tool" aria-label="烘焙"><svg><use href="#baketex"/></svg></button>
      <span class="sep"></span>
      <button class="tool" aria-label="转换"><svg><use href="#convert"/></svg></button>
      <button class="tool" aria-label="V-Ray"><svg><use href="#vray"/></svg></button>
    </div>

    <div class="toolbar">
      <span class="grip"></span>
      <button class="tool" aria-label="火焰网格"><svg><use href="#cubefire"/></svg></button>
      <button class="tool" aria-label="液体网格"><svg><use href="#cubewater"/></svg></button>
      <button class="tool" aria-label="火源"><svg><use href="#redfire"/></svg></button>
      <button class="tool" aria-label="液体源"><svg><use href="#bluedrop"/></svg></button>
      <button class="tool" aria-label="粒子"><svg><use href="#bubbles"/></svg></button>
      <button class="tool" aria-label="体积"><svg><use href="#purplebox"/></svg></button>
      <span class="sep"></span>
      <button class="tool fly" aria-label="体素"><svg><use href="#nodes"/></svg></button>
      <button class="tool fly" aria-label="平面力"><svg><use href="#greenarrow"/></svg></button>
      <button class="tool" aria-label="映射"><svg><use href="#checker"/></svg></button>
      <button class="tool" aria-label="湍流"><svg><use href="#spark"/></svg></button>
      <span class="sep"></span>
      <button class="tool" aria-label="开始模拟"><svg><use href="#play"/></svg></button>
      <button class="tool" aria-label="暂停模拟"><svg><use href="#pause"/></svg></button>
      <button class="tool" aria-label="停止模拟"><svg><use href="#stop"/></svg></button>
      <button class="tool" aria-label="恢复模拟"><svg><use href="#replay"/></svg></button>
      <button class="tool" aria-label="删除缓存"><svg><use href="#trash"/></svg></button>
      <span class="sep"></span>
      <button class="tool" aria-label="任务"><svg><use href="#tasks"/></svg></button>
      <span class="sep"></span>
      <button class="tool" aria-label="火"><svg><use href="#fire1"/></svg></button>
      <button class="tool" aria-label="汽油火"><svg><use href="#fire2"/></svg></button>
      <button class="tool" aria-label="爆炸"><svg><use href="#blast"/></svg></button>
      <button class="tool" aria-label="大爆炸"><svg><use href="#blast"/></svg></button>
      <button class="tool fly" aria-label="浓烟"><svg><use href="#smoke"/></svg></button>
      <button class="tool" aria-label="香烟"><svg><use href="#cigar"/></svg></button>
      <button class="tool" aria-label="蜡烛"><svg><use href="#candle"/></svg></button>
      <button class="tool" aria-label="云"><svg><use href="#cloud"/></svg></button>
      <button class="tool" aria-label="火箭"><svg><use href="#rocket"/></svg></button>
      <span class="sep"></span>
      <button class="tool" aria-label="水"><svg><use href="#water"/></svg></button>
      <button class="tool" aria-label="牛奶"><svg><use href="#milk"/></svg></button>
      <button class="tool" aria-label="啤酒"><svg><use href="#beer"/></svg></button>
      <button class="tool" aria-label="咖啡"><svg><use href="#coffee"/></svg></button>
      <button class="tool fly" aria-label="蜂蜜"><svg><use href="#honey"/></svg></button>
      <button class="tool" aria-label="血液"><svg><use href="#blood"/></svg></button>
      <button class="tool" aria-label="油漆"><svg><use href="#paint"/></svg></button>
      <button class="tool" aria-label="漩涡"><svg><use href="#swirl"/></svg></button>
      <button class="tool" aria-label="水花"><svg><use href="#milk"/></svg></button>
    </div>

    <main class="workspace">
      <aside class="layouts">
        <button class="expand" aria-label="展开">▶</button>
        <button class="quad" aria-label="四视图"><span></span><span></span><span></span><span></span></button>
      </aside>

      <section class="explorer">
        <nav class="ex-menu"><button>选择</button><button>显示</button><button>编辑</button><button>自定义</button></nav>
        <div class="ex-search">
          <input type="text" aria-label="查找">
          <button aria-label="清除"><svg class="i12" viewBox="0 0 12 12"><path fill="none" stroke="#999" stroke-width="2" d="M1 1l10 10M11 1L1 11"/></svg></button>
          <button class="sq" aria-label="过滤"><svg class="i16"><use href="#o-filterpick"/></svg></button>
          <span class="bar"></span>
          <button class="lock" aria-label="锁定"><svg class="i16"><use href="#lock"/></svg></button>
        </div>
        <div class="ex-body">
          <div class="ex-icons">
            <button class="lit" aria-label="几何体"><svg><use href="#o-sphere"/></svg></button>
            <button class="lit" aria-label="图形"><svg><use href="#o-shape"/></svg></button>
            <button class="lit" aria-label="灯光"><svg><use href="#o-light"/></svg></button>
            <button class="lit" aria-label="摄影机"><svg><use href="#o-cam"/></svg></button>
            <button class="lit" aria-label="辅助对象"><svg><use href="#o-help"/></svg></button>
            <button class="lit" aria-label="空间扭曲"><svg><use href="#o-warp"/></svg></button>
            <button class="lit" aria-label="组"><svg><use href="#o-group"/></svg></button>
            <button class="lit" aria-label="外部参照"><svg><use href="#o-xref"/></svg></button>
            <button class="lit" aria-label="骨骼"><svg><use href="#o-bone"/></svg></button>
            <button class="lit" aria-label="容器"><svg><use href="#o-box"/></svg></button>
            <button class="lit" aria-label="冻结"><svg><use href="#o-frozen"/></svg></button>
            <button class="lit" aria-label="隐藏对象"><svg><use href="#o-eye"/></svg></button>
            <hr>
            <button aria-label="全选"><svg><use href="#o-all"/></svg></button>
            <button aria-label="全不选"><svg><use href="#o-none"/></svg></button>
            <button aria-label="反选"><svg><use href="#o-invert"/></svg></button>
            <hr>
            <button aria-label="过滤设置"><svg><use href="#o-fgear"/></svg></button>
            <button aria-label="过滤器"><svg><use href="#o-funnel"/></svg></button>
            <button aria-label="容器组"><svg><use href="#o-brick"/></svg></button>
          </div>
          <div class="ex-list"><div class="ex-head">名称(按升序排序)</div></div>
        </div>
        <div class="ex-foot">
          <select aria-label="图层"><option>默认</option></select><span class="drop">▼</span>
          <span class="bar"></span>
          <button aria-label="图层管理器"><svg class="i16"><use href="#stack"/></svg></button>
          <button class="sq" aria-label="层次"><svg class="i16"><use href="#tree"/></svg></button>
          <span class="bar"></span>
          <span>选择集:</span>
          <span class="quote">»</span>
        </div>
      </section>

      <section class="viewports">
        <div class="vp grid"></div>
        <div class="vp grid across">
          <svg class="gizmo" viewBox="0 0 60 60"><path fill="#777" d="M0 16h27v30H0z"/><path fill="#8c8c8c" d="M3 19h20v24H3z"/><path fill="none" stroke="#5c5f66" stroke-width="1.500" d="M5 25v12M5 31h4M9 25v12M13 25v9q2 4 5 0V25M13 25l5 0"/><path fill="none" stroke="#999" d="M0 51q30 2 50-3l-15-1"/></svg>
        </div>
        <div class="vp grid down"></div>
        <div class="vp persp">
          <svg viewBox="842 450 68 200"><path fill="#888" d="M850 457h12l-5 6v5l-3-2v-3z"/><path fill="none" stroke="#74777d" stroke-width="6" d="M842 536q39 4 46-14 2-12-15-18"/><path fill="#8b8b8b" d="M842 486l14-4 20 9v22l-21 13-13-8z"/><path fill="#a0a0a0" d="M842 486l14-4 20 9-20 6-14-6z"/><path fill="#757575" d="M856 497l20-6v22l-21 13z"/><path fill="none" stroke="#555" d="M861 503v11l3-2v-9M867 501v10l3-2v-9M848 488l10 4"/><path fill="none" stroke="#777" stroke-width=".8" d="M842 568l62 24-62 44M842 577l52 22M842 587l44 20M842 597l35 15M842 607l27 11M842 617l18 7M895 588l-53 34M883 583l-41 26M870 578l-28 18M857 573l-15 10M842 627l8 3"/><path stroke="#000" d="M842 619l10 6"/></svg>
        </div>
      </section>

      <aside class="command">
        <div class="cmd-tabs">
          <button class="cur" aria-label="创建"><svg><use href="#t-plus"/></svg></button><button aria-label="修改"><svg><use href="#t-modify"/></svg></button><button aria-label="层次"><svg><use href="#t-hier"/></svg></button><button aria-label="运动"><svg><use href="#t-motion"/></svg></button><button aria-label="显示"><svg><use href="#t-disp"/></svg></button><button aria-label="实用程序"><svg><use href="#t-util"/></svg></button>
        </div>
        <div class="cmd-kinds">
          <button class="cur" aria-label="几何体"><svg><use href="#o-sphere"/></svg></button><button aria-label="图形"><svg><use href="#o-shape"/></svg></button><button aria-label="灯光"><svg><use href="#o-light"/></svg></button><button aria-label="摄影机"><svg><use href="#o-cam"/></svg></button><button aria-label="辅助对象"><svg><use href="#o-help"/></svg></button><button aria-label="空间扭曲"><svg><use href="#o-warp"/></svg></button><button aria-label="系统"><svg><use href="#o-gears"/></svg></button>
        </div>
        <span class="pick category"><select aria-label="类别"><option>标准基本体</option></select></span>
        <div class="cmd-scroll">
          <div class="rollouts">
            <section class="rollout">
              <h2>对象类型</h2>
              <label class="autogrid"><input type="checkbox" disabled>自动栅格</label>
              <div class="prims">
                <button>长方体</button><button>圆锥体</button><button>球体</button><button>几何球体</button><button>圆柱体</button><button>管状体</button><button>圆环</button><button>四棱锥</button><button>茶壶</button><button>平面</button><button>加强型文本</button>
              </div>
            </section>
            <section class="rollout">
              <h2>名称和颜色</h2>
              <div class="naming"><input type="text" aria-label="名称"><button aria-label="颜色" class="swatch"></button></div>
            </section>
          </div>
          <div class="track"></div>
        </div>
      </aside>
    </main>

    <section class="timeline">
      <span class="grip"></span>
      <div class="slider mono">
        <button aria-label="上一帧">&lt;</button><button class="thumb">0 / 100</button><button aria-label="下一帧">&gt;</button>
      </div>
      <div class="ruler-row">
        <button class="mini" aria-label="曲线编辑器"><svg class="i16"><use href="#curve"/></svg></button>
        <div class="ruler mono">
          <div class="scale">
            <span>0</span><span>10</span><span>20</span><span>30</span><span>40</span><span>50</span><span>60</span><span>70</span><span>80</span><span>90</span><span>100</span>
          </div>
        </div>
      </div>
    </section>

    <footer class="status">
      <div class="listener"><div></div><div>一&nbsp;&nbsp;&nbsp; 于 顶层级</div></div>
      <span class="sep tall"></span>
      <div class="info">
        <div class="line">
          <span class="sel">未选定任何对象</span>
          <button class="dim fly" aria-label="孤立"><svg class="i20"><use href="#iso"/></svg></button>
          <button class="dim" aria-label="锁定选择"><svg class="i16"><use href="#lock"/></svg></button>
          <button aria-label="绝对模式"><svg class="i16"><use href="#abs"/></svg></button>
          <label class="mono">X: <input type="text" value="204.505" disabled></label>
          <label class="mono">Y: <input type="text" value="546.173" disabled></label>
          <label class="mono">Z: <input type="text" value="0.0" disabled></label>
          <span class="gridsize">栅格 <i>= 10.0</i></span>
        </div>
        <div class="line">
          <span class="prompt">单击或单击并拖动以选择对象</span>
          <span class="sep"></span>
          <button class="chip" aria-label="安全"><svg class="i16"><use href="#shield"/></svg></button>
          <span>启用:</span><span class="led"></span>
          <button class="chip" aria-label="1"><b>1</b></button>
          <span class="sep"></span>
          <svg class="i16"><use href="#minicube"/></svg>
          <span class="tag">添加时间标记</span>
        </div>
      </div>
      <div class="transport">
        <div class="line">
          <button aria-label="转至开头"><svg class="i16"><use href="#first"/></svg></button><span class="sep"></span>
          <button aria-label="上一帧"><svg class="i16"><use href="#prev"/></svg></button>
          <button class="fly" aria-label="播放"><svg class="i16"><use href="#go"/></svg></button>
          <button aria-label="下一帧"><svg class="i16"><use href="#next"/></svg></button><span class="sep"></span>
          <button aria-label="转至结尾"><svg class="i16"><use href="#last"/></svg></button>
        </div>
        <div class="line">
          <button aria-label="关键点模式"><svg class="i16"><use href="#updown"/></svg></button><span class="sep"></span>
          <span class="frame"><input class="mono" type="text" value="0" aria-label="当前帧"><svg viewBox="0 0 8 12"><path fill="#d8d8d8" d="M4 0l3 4H1zM4 12l3-4H1z"/></svg></span><span class="sep"></span>
          <button aria-label="时间配置"><svg class="i16"><use href="#clock"/></svg></button>
        </div>
      </div>
      <button class="setkey" aria-label="设置关键点"><svg><use href="#bigkey"/></svg></button>
      <div class="keys"><button>自动关键点</button><button>设置关键点</button></div>
      <div class="keyopts">
        <span class="pick"><select aria-label="选择集"><option>选定对象</option></select></span>
        <div class="line"><svg class="i16"><use href="#tangent"/></svg><button class="flat">关键点过滤器...</button></div>
      </div>
      <div class="navs">
        <svg viewBox="0 0 110 46"><g fill="none" stroke="#bbb" stroke-width="1.800"><circle cx="22" cy="12" r="5"/><path d="M18 17l-5 5M65 8v-3h4M84 5h4v3M65 18v3h4M84 21h4v-3M17 33h8v8h-8zM81 30h14v12H81z"/></g><g fill="#4fb8b5"><path d="M42 5h4v8h-4zM47 5h4v8h-4z"/><circle cx="76" cy="12" r="5"/><circle cx="94" cy="12" r="4"/></g><path fill="none" stroke="#4fb8b5" stroke-width="2" d="M56 38q8 2 14-8"/></svg>
      </div>
    </footer>
  </div>

  <section class="dialog" role="dialog" aria-label="自定义用户界面">
    <header>
      <span class="logo" aria-hidden="true">3</span><h2>自定义用户界面</h2>
      <button aria-label="帮助">?</button>
      <button aria-label="关闭"><svg viewBox="0 0 12 12"><path d="M1 1l10 10M11 1L1 11"/></svg></button>
    </header>
    <div class="tabs" role="tablist"><button role="tab">鼠标</button><button role="tab" class="cur" aria-selected="true">工具栏</button><button role="tab">四元菜单</button><button role="tab">菜单</button><button role="tab">颜色</button></div>
    <div class="dlg-body">
      <div class="left">
        <div class="field"><label for="grp">组:</label><span class="pick"><select id="grp"><option>主 UI</option></select></span></div>
        <div class="field"><label for="cat">类别:</label><span class="pick"><select id="cat" class="mono"><option>Spline Dynamics</option></select></span></div>
        <div class="actions">
          <table>
            <colgroup><col class="c-icon"><col class="c-name"><col></colgroup>
            <thead><tr><th colspan="2">操作</th><th class="pad"></th></tr></thead>
            <tbody><tr><td class="ic">QP</td><td class="name mono">QProxies</td><td></td></tr></tbody>
          </table>
        </div>
      </div>
      <div class="right">
        <span class="pick"><select class="mono" aria-label="工具栏"><option>Animation Layers</option></select></span>
        <div class="btns"><button>新建...</button><button>删除...</button><button>重命名...</button></div>
        <label class="hide"><input type="checkbox" checked>隐藏</label>
        <div class="btns last"><button>加载...</button><button>保存...</button><button>重置</button></div>
      </div>
    </div>
  </section>

  <div class="tooltip mono" role="tooltip">QProxies</div>
  <svg class="pointer" viewBox="0 0 640 330" aria-hidden="true"><path fill="url(#tail)" d="M388 319L498 221L573 158L616 124L611 119L631 115L625 134L620 129L578 165L501 225z"/></svg>
  <div class="watermark">3D溜溜网</div>
</div>
</body>
</html>
```
FILE: styles.css
```css
* { box-sizing: border-box; }

body {
  margin: 0;
  background: #dcdcdc;
  color: #e6e6e6;
  font: 12px/16px "Noto Sans CJK SC", "Noto Sans", sans-serif;
}

button, input, select {
  margin: 0;
  padding: 0;
  border: 0;
  border-radius: 0;
  background: none;
  color: inherit;
  font: inherit;
}

button { display: flex; align-items: center; justify-content: center; white-space: nowrap; }
select { appearance: none; width: 100%; height: 100%; padding-left: 4px; }
i { font-style: normal; }
h1, h2 { margin: 0; font-size: 12px; font-weight: 400; }
svg { display: block; flex: none; }

.mono, i { font-family: "DejaVu Sans Mono", "Noto Sans CJK SC", monospace; font-size: 10px; }
.sprite { position: absolute; width: 0; height: 0; }
.i12 { width: 12px; height: 12px; }
.i16 { width: 16px; height: 16px; }
.i20 { width: 20px; height: 20px; }

.desktop {
  position: relative;
  display: flex;
  min-height: 100vh;
  padding: 1px 8px 8px;
  overflow: hidden;
  background:
    linear-gradient(#1d1d26, #1d1d26) right top / 8px 46px no-repeat,
    linear-gradient(#25232a, #25232a) left top / 100% 1px no-repeat,
    linear-gradient(#c4c4c4, #c4c4c4) left 256px / 8px 22px no-repeat,
    linear-gradient(#d0d0d0, #d0d0d0) left 728px / 8px 1px no-repeat,
    linear-gradient(#ebebeb, #ebebeb 740px, #d6d6d6);
}

.behind { position: absolute; left: -3px; color: #444; font-size: 11px; white-space: nowrap; }
.behind-1 { top: 65px; }
.behind-2 { top: 88px; }

.window {
  position: relative;
  display: flex;
  flex: 1;
  flex-direction: column;
  min-width: 0;
  background: #444;
  box-shadow: 0 1px 6px #0009;
}

.logo {
  flex: none;
  width: 14px;
  height: 15px;
  margin: 0 1px;
  border-bottom: 4px solid #1b6b8a;
  border-radius: 1px;
  background: #3aa6c9;
  color: #fff;
  font: bold 9px/11px "Noto Sans", sans-serif;
  text-align: center;
}

/* Title and menus */
.titlebar { display: flex; flex: none; align-items: center; height: 30px; padding-left: 8px; background: #fff; color: #111; }
.titlebar h1 { margin-left: 5px; }
.titlebar h1 span { font-family: "Noto Sans", sans-serif; font-size: 13px; }
.caption { display: flex; margin-left: auto; }
.caption button { width: 46px; height: 30px; }
.caption svg, .dialog header button svg { width: 12px; height: 12px; fill: none; stroke: #111; }

.menubar {
  display: flex;
  flex: none;
  align-items: center;
  gap: 27px;
  height: 23px;
  padding: 0 3px 0 13px;
  border-bottom: 1px solid #141414;
  background: linear-gradient(#565656, #444);
  color: #eee;
  font-size: 13px;
}
.menubar button { padding-bottom: 3px; }
.menubar i { font-size: 11px; }
.workspace-pick { display: flex; align-items: center; gap: 5px; margin-left: auto; }
.workspace-pick label { margin-left: 4px; font-size: 12px; }
.workspace-pick .pick { width: 123px; height: 20px; font-size: 12px; }

.pick { position: relative; display: block; flex: none; height: 18px; border: 1px solid #3c3c3c; background: #646464; color: #e2e2e2; }
.pick::after {
  content: "";
  position: absolute;
  top: 50%;
  right: 7px;
  margin-top: -3px;
  border: 3px solid transparent;
  border-top: 5px solid #ddd;
  border-bottom: 0;
}

/* Toolbars */
.toolbar { display: flex; flex: none; align-items: center; height: 33px; overflow: hidden; }
.grip {
  flex: none;
  width: 3px;
  height: 27px;
  margin: 0 3px;
  background:
    repeating-linear-gradient(transparent 0 1px, #444 1px 2px),
    repeating-linear-gradient(90deg, #b0b0b0 0 1px, #444 1px 2px);
}
.grip.mid { margin: 0 4px 0 3px; }
.tool { position: relative; flex: none; width: 32px; height: 33px; color: #b5b5b5; }
.tool svg { width: 24px; height: 24px; }
.tool.on { width: 30px; height: 30px; margin: 0 1px; border: 1px solid #6b95ce; border-radius: 3px; background: #5b85bd; }
.tool.qp { width: 30px; height: 29px; margin: 0 1px; border-radius: 2px; background: #333; color: #7fb84b; font: italic 15px "Open Sans", sans-serif; }
.fly { position: relative; }
.fly::after {
  content: "";
  position: absolute;
  right: 0;
  bottom: 1px;
  border: 2px solid #ddd;
  border-top-color: transparent;
  border-left-color: transparent;
}
.sep { flex: none; width: 2px; height: 17px; margin: 0 3px; background: #1d1d1d; }
.main .sep { margin: 0 2px; }
.main .pick.filter { align-self: flex-start; width: 69px; height: 20px; margin-top: 3px; }
.main .pick.path { width: 168px; height: 31px; margin-left: 4px; }
.path::after { right: 5px; }
.main .chev { margin: 0 7px; }
.main .chev + .grip + .tool { margin-right: 4px; }

/* Workspace */
.workspace { display: grid; flex: 1; grid-template-columns: 40px 358px minmax(0, 1fr) 208px; padding-top: 2px; }
.explorer, .command {
  background:
    repeating-linear-gradient(90deg, transparent 0 1px, #444 1px 2px) 0 0 / 100% 3px no-repeat,
    repeating-linear-gradient(#a0a0a0 0 1px, #444 1px 2px) 0 0 / 100% 3px no-repeat;
}

.layouts { display: flex; flex-direction: column; align-items: center; justify-content: flex-end; padding: 0 0 2px; }
.layouts { background: linear-gradient(#444, #444) 0 0 / 100% 8px no-repeat, linear-gradient(90deg, #343434, #2b2b2b); }
.expand { width: 20px; height: 20px; margin-bottom: 10px; border: 1px solid #3a3a3a; border-radius: 3px; background: #555; font-size: 8px; }
.quad {
  display: grid;
  grid-template-columns: 14px 14px;
  grid-template-rows: 13px 13px;
  gap: 2px;
  align-items: stretch;
  place-content: center;
  width: 36px;
  height: 44px;
  margin-left: 4px;
  border-radius: 3px 0 0 3px;
  background: linear-gradient(#50647c, #3f80d4);
}
.quad span { border: 1px solid #26364a; background: #5b6d84; }

.explorer { display: flex; flex-direction: column; padding: 10px 3px 2px 8px; }
.ex-menu { display: flex; gap: 20px; padding-left: 10px; height: 20px; }
.ex-search { display: flex; align-items: center; height: 28px; margin-top: 2px; }
.ex-search input { width: 150px; height: 23px; border: 1px solid #656565; background: #424242; }
.ex-search button:not(.sq) { width: 24px; height: 24px; }
.sq { width: 24px; height: 24px; background: #5b85bd; }
.bar { flex: none; width: 1px; height: 24px; margin: 0 3px; background: #8a8a8a; }
.lock { color: #d0d0d0; }
.ex-body { display: flex; flex: 1; }
.ex-icons { display: flex; flex-direction: column; align-items: center; gap: 3px; width: 22px; margin: 4px 3px 0 -4px; }
.ex-icons button { width: 22px; height: 20px; color: #d0d0d0; }
.ex-icons svg { width: 16px; height: 16px; }
.ex-icons .lit { background: #5b85bd; }
.ex-icons hr { width: 18px; height: 1px; margin: 1px 0; border: 0; background: #909090; }
.ex-list { flex: 1; border: 1px solid #393939; border-top: 0; }
.ex-head { height: 21px; padding-left: 2px; border: 1px solid #5e5e5e; border-right: 0; line-height: 19px; }
.ex-foot { display: flex; align-items: center; height: 27px; }
.ex-foot select { width: 145px; height: 23px; padding-left: 2px; border: 1px solid #656565; color: #e8e83a; }
.ex-foot .drop { width: 14px; margin-right: 1px; color: #111; font-size: 6px; text-align: center; }
.ex-foot button { width: 23px; height: 24px; }
.ex-foot button:not(.sq) { width: 22px; }
.quote { align-self: flex-start; margin-left: auto; margin-right: 4px; color: #5560a8; font-size: 14px; line-height: 10px; }

.viewports { display: grid; grid-template-columns: 1fr 1fr; grid-template-rows: 1fr 1fr; gap: 5px; padding: 0 6px 2px 0; }
.vp { position: relative; overflow: hidden; border: 1px solid #333; background-color: #3c3c3c; }
.grid {
  background-image:
    linear-gradient(#111, #111),
    repeating-linear-gradient(90deg, #686868 0 1px, transparent 1px 6px),
    repeating-linear-gradient(#686868 0 1px, transparent 1px 6px);
  background-position: 50% 50%, 0 0, 0 0;
  background-size: 1px 100%, auto, auto;
  background-repeat: no-repeat, repeat, repeat;
}
.across { background-size: 100% 1px, auto, auto; }
.gizmo { position: absolute; right: 7px; top: 23px; width: 60px; height: 60px; }
.persp { border: 2px solid #78683a; background: linear-gradient(#202020, #4a4a4a); }
.persp svg { position: absolute; top: 1px; right: 0; width: 68px; height: 200px; }

.command { display: flex; flex-direction: column; padding: 9px 2px 2px 0; }
.cmd-tabs { display: flex; height: 27px; background: #383838; }
.cmd-tabs button { width: 32px; border-right: 1px solid #2e2e2e; }
.cmd-tabs svg, .cmd-kinds svg { width: 16px; height: 16px; }
.cmd-tabs .cur { width: 30px; background: #444; }
.cmd-kinds { display: flex; align-items: center; height: 34px; padding-left: 1px; }
.cmd-kinds button { width: 26px; height: 24px; }
.cmd-kinds .cur { width: 24px; border: 1px solid #6b95ce; border-radius: 2px; background: #5b85bd; }
.category { height: 21px; margin: 0 1px 0 1px; }
.cmd-scroll { display: flex; flex: 1; gap: 2px; padding: 5px 0 0 1px; }
.rollouts { flex: 1; }
.track { width: 8px; border-radius: 4px 4px 0 0; background: #393939; }
.rollout { margin-bottom: 3px; padding: 0 4px 4px; border: 1px solid #3b3b3b; border-radius: 3px; background: #4e4e4e; }
.rollout h2 { display: flex; align-items: center; gap: 7px; height: 17px; color: #fff; font-size: 13px; font-weight: 700; }
.rollout h2::before { content: ""; margin-left: 1px; border: 3px solid transparent; border-top: 4px solid #ccc; border-bottom: 0; }
.rollout h2::after {
  content: "";
  width: 7px;
  height: 7px;
  margin: 0 3px 0 auto;
  background:
    repeating-linear-gradient(transparent 0 1px, #4e4e4e 1px 3px),
    repeating-linear-gradient(90deg, #aaa 0 1px, #4e4e4e 1px 3px);
}
.autogrid { display: flex; align-items: center; justify-content: center; gap: 5px; height: 29px; color: #8a8a8a; }
.autogrid input { appearance: none; width: 13px; height: 13px; border: 1px solid #444; background: #555; }
.prims { display: grid; grid-template-columns: 1fr 1fr; gap: 4px; }
.prims button { height: 21px; border: 1px solid #484848; border-radius: 3px; background: #636363; }
.naming { display: flex; gap: 4px; height: 22px; margin-top: 4px; }
.naming input { flex: 1; min-width: 0; border: 1px solid #444; background: #555; }
.swatch { width: 20px; height: 20px; border: 1px solid #111; background: #c43282; }

/* Time slider and track bar */
.timeline { position: relative; flex: none; height: 64px; padding: 4px 0 0 9px; }
.timeline .grip { position: absolute; left: 0; top: 4px; height: 56px; }
.slider { display: flex; gap: 1px; height: 18px; }
.slider button { width: 16px; height: 17px; border-radius: 3px; background: #636363; }
.slider .thumb { width: 124px; }
.ruler-row { display: flex; margin-top: 3px; margin-right: 49px; border-top: 1px solid #111; }
.mini { width: 50px; height: 26px; padding-right: 9px; }
.ruler { flex: 1; height: 37px; padding: 0 5px 0 4px; background: linear-gradient(#444, #444) 0 24px / 100% 1px no-repeat, #292929; }
.scale {
  display: flex;
  justify-content: space-between;
  height: 24px;
  background:
    linear-gradient(90deg, #8a8430d0, #8a8430d0) 0 0 / 7px 24px no-repeat,
    repeating-linear-gradient(90deg, #777 0 1px, transparent 1px 10%),
    repeating-linear-gradient(90deg, #666 0 1px, transparent 1px 1%) 0 0 / 100% 11px no-repeat;
}
.scale span { display: flex; justify-content: center; width: 0; padding-top: 10px; color: #ccc; }
.scale span:first-child { color: #e8e080; }

/* Status bar */
.status { display: flex; flex: none; align-items: flex-start; height: 56px; padding: 5px 8px 4px 4px; }
.line { display: flex; align-items: center; height: 23px; }
.listener { width: 98px; height: 46px; flex: none; border: 1px solid #fff; background: #fff; color: #a01818; line-height: 19px; }
.listener div { height: 22px; padding-left: 5px; border-top: 1px solid #777; border-left: 1px solid #777; white-space: nowrap; overflow: hidden; }
.listener div:first-child { margin-bottom: 1px; background: #dcc4c4; }
.sep.tall { height: 50px; margin: 0 5px 0 3px; }
.info { width: 524px; flex: none; }
.info .line + .line { padding-top: 3px; }
.sel { width: 63px; overflow: hidden; white-space: nowrap; }
.info .line > button { width: 26px; height: 22px; }
.info .line .dim { color: #262626; }
.info .line:first-child > .dim:nth-child(2) { width: 30px; }
.info label { display: flex; align-items: center; width: 86px; padding-left: 2px; gap: 2px; }
.info label input { width: 59px; height: 19px; padding-left: 4px; border: 1px solid #3a3a3a; background: #565656; color: #8e8e8e; }
.gridsize { margin-left: 4px; }
.prompt { width: 253px; }
.info .line > .chip { width: 20px; height: 20px; margin: 0 5px 0 3px; border-radius: 3px; background: #5f5f5f; }
.chip b { width: 14px; height: 14px; border-radius: 50%; background: #f2f2f2; color: #333; font-size: 10px; line-height: 14px; text-align: center; }
.led { width: 9px; height: 9px; margin: 0 4px 0 8px; border-radius: 50%; background: #4fd84f; }
.tag { margin-left: 8px; }
.transport { width: 124px; flex: none; }
.transport button { width: 22px; height: 20px; }
.transport .sep { margin: 0 2px 0 1px; }
.transport .line:last-child .sep { margin: 0 1px 0 0; }
.frame { display: flex; align-items: center; width: 70px; height: 18px; padding: 0 4px; background: #636363; }
.frame input { flex: 1; min-width: 0; }
.frame svg { width: 8px; height: 12px; }
.setkey { width: 40px; height: 42px; margin: 2px 5px 0 0; flex: none; border-radius: 3px; background: #636363; }
.setkey svg { width: 28px; height: 28px; }
.keys { display: flex; flex: none; flex-direction: column; gap: 3px; width: 66px; margin-top: 2px; }
.keys button, .flat { height: 20px; border-radius: 3px; background: #5e5e5e; }
.keyopts { flex: none; width: 114px; padding: 2px 0 0 4px; }
.keyopts .pick { height: 19px; margin: 0; }
.keyopts .line { gap: 7px; padding-left: 3px; }
.navs { flex: 1; display: flex; justify-content: flex-end; min-width: 0; }
.navs svg { width: 110px; height: 46px; }

/* Customize dialog */
.dialog { position: absolute; left: 290px; top: 158px; display: flex; flex-direction: column; width: 555px; height: 553px; background: #444; box-shadow: 0 4px 14px #000b; }
.dialog header { display: flex; align-items: center; height: 30px; padding-left: 8px; background: #fff; color: #111; }
.dialog header h2 { margin: 0 auto 0 5px; }
.dialog header button { width: 45px; height: 30px; font-size: 14px; }
.tabs { display: flex; align-items: flex-end; gap: 1px; height: 23px; padding-left: 2px; border-bottom: 1px solid #0c0c0c; color: #eee; }
.tabs button { height: 19px; padding: 0 11px; border: 1px solid #161616; border-bottom: 0; border-radius: 4px 4px 0 0; background: #3b3b3b; }
.tabs button:nth-child(3) { padding: 0 5px; }
.tabs button:nth-child(n+4) { padding: 0 10px; }
.tabs .cur { height: 21px; margin-bottom: -1px; padding: 0 5px; background: #444; }
.dlg-body { display: flex; flex: 1; justify-content: space-between; padding: 20px 21px 21px 18px; }
.left, .right { display: flex; flex-direction: column; width: 239px; }
.right { width: 238px; }
.field { display: flex; align-items: center; justify-content: flex-end; gap: 6px; height: 19px; margin-bottom: 9px; }
.field .pick { width: 189px; height: 20px; }
.right > .pick { height: 20px; }
.actions { flex: 1; border: 1px solid #7c7c84; padding: 1px; }
table { width: 100%; border-collapse: collapse; table-layout: fixed; color: #111; }
.c-icon { width: 20px; }
.c-name { width: 197px; }
th, td { padding: 0; font-weight: 400; text-align: left; }
th { height: 24px; padding-left: 35px; background: #fff; }
th.pad { padding: 0; border-left: 1px solid #ddd; }
td { height: 16px; }
td.ic { padding-left: 3px; color: #58b878; font: italic 11px/16px "Open Sans", sans-serif; }
td.name { padding-left: 2px; background: #efefef; }
.btns { display: flex; justify-content: space-between; margin: 8px 1px 0; }
.btns button { width: 73px; height: 19px; border-radius: 3px; background: #636363; }
.btns.last { margin-top: auto; margin-bottom: 1px; }
.hide { display: flex; align-items: center; gap: 4px; margin: 7px 0 0 4px; }
.hide input { appearance: none; position: relative; width: 13px; height: 13px; border: 1px solid #383838; background: #666; }
.hide input::after { content: ""; position: absolute; left: 3px; top: 0; width: 4px; height: 7px; border: solid #eee; border-width: 0 2px 2px 0; transform: rotate(45deg); }

/* Callout layer */
.tooltip { position: absolute; left: 638px; top: 137px; width: 65px; height: 22px; border-radius: 4px; background: #8a8a8a; box-shadow: 1px 2px 3px #0006; color: #eee; line-height: 22px; text-align: center; }
.tooltip::before { content: ""; position: absolute; left: 9px; top: -6px; border: 5px solid transparent; border-top: 0; border-bottom: 6px solid #8a8a8a; }
.pointer { position: absolute; left: 0; top: 0; width: 640px; height: 330px; pointer-events: none; }
.watermark { position: absolute; right: 16px; bottom: 9px; color: #fffc; font: bold 44px/48px "Noto Sans", "Noto Sans CJK SC", sans-serif; white-space: nowrap; }
```
